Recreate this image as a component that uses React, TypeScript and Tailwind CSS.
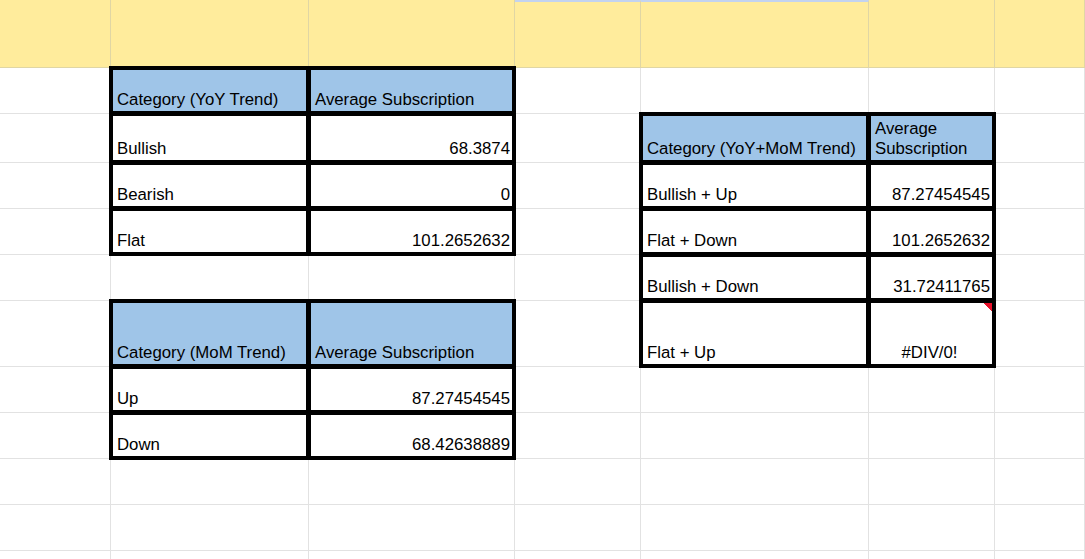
type Kind = "head" | "label" | "num" | "center";

type Cell = { text: string; kind: Kind; note?: boolean };

const cells: Record<string, Cell> = {
  "1-1": { text: "Category (YoY Trend)", kind: "head" },
  "1-2": { text: "Average Subscription", kind: "head" },
  "2-1": { text: "Bullish", kind: "label" },
  "2-2": { text: "68.3874", kind: "num" },
  "2-4": { text: "Category (YoY+MoM Trend)", kind: "head" },
  "2-5": { text: "Average Subscription", kind: "head" },
  "3-1": { text: "Bearish", kind: "label" },
  "3-2": { text: "0", kind: "num" },
  "3-4": { text: "Bullish + Up", kind: "label" },
  "3-5": { text: "87.27454545", kind: "num" },
  "4-1": { text: "Flat", kind: "label" },
  "4-2": { text: "101.2652632", kind: "num" },
  "4-4": { text: "Flat + Down", kind: "label" },
  "4-5": { text: "101.2652632", kind: "num" },
  "5-4": { text: "Bullish + Down", kind: "label" },
  "5-5": { text: "31.72411765", kind: "num" },
  "6-1": { text: "Category (MoM Trend)", kind: "head" },
  "6-2": { text: "Average Subscription", kind: "head" },
  "6-4": { text: "Flat + Up", kind: "label" },
  "6-5": { text: "#DIV/0!", kind: "center", note: true },
  "7-1": { text: "Up", kind: "label" },
  "7-2": { text: "87.27454545", kind: "num" },
  "8-1": { text: "Down", kind: "label" },
  "8-2": { text: "68.42638889", kind: "num" },
};

const ROWS = 12;
const COLS = 7;

const kindClass: Record<Kind, string> = {
  head: "bg-[#9fc5e8] justify-start text-left pl-[6px]",
  label: "bg-white justify-start text-left pl-[6px]",
  num: "bg-white justify-end text-right",
  center: "justify-center text-center",
};

function GridCell({ r, c }: { r: number; c: number }) {
  const cell = cells[`${r}-${c}`];
  const yellow = r === 0;
  const topBlue = r === 0 && (c === 3 || c === 4);

  if (!cell) {
    return (
      <div
        className={
          "border-r border-b " +
          (yellow ? "bg-[#ffec9c] border-[#e0d6a4] " : "bg-white border-[#e2e2e2] ") +
          (topBlue ? "border-t-2 border-t-[#c3d3ef]" : "")
        }
      />
    );
  }

  // red comment marker in the corner
  const note = cell.note
    ? "bg-[linear-gradient(225deg,#e8102a_9px,#ffffff_9px)] bg-no-repeat"
    : "";

  return (
    <div
      className={
        "relative flex items-end border-r border-b border-[#e2e2e2] pr-[4px] pb-[3px] text-[16.8px] leading-[20px] text-black " +
        kindClass[cell.kind] +
        " " +
        note
      }
    >
      <span>{cell.text}</span>
      {/* thick cell border, stacked above neighbouring cells */}
      <span className="pointer-events-none absolute -inset-[2px] z-20 border-[4px] border-black" />
    </div>
  );
}

export default function App() {
  return (
    <div
      className="h-[559px] w-[1085px] overflow-hidden bg-white"
      style={{ fontFamily: '"Liberation Sans", Arial, sans-serif' }}
    >
      <div className="grid grid-cols-[111px_198px_206px_126px_228px_126px_1fr] grid-rows-[68px_46px_49px_46px_46px_46px_66px_46px_46px_46px_46px_46px]">
        {Array.from({ length: ROWS }).map((_, r) =>
          Array.from({ length: COLS }).map((__, c) => (
            <GridCell key={`${r}-${c}`} r={r} c={c} />
          ))
        )}
      </div>
    </div>
  );
}
